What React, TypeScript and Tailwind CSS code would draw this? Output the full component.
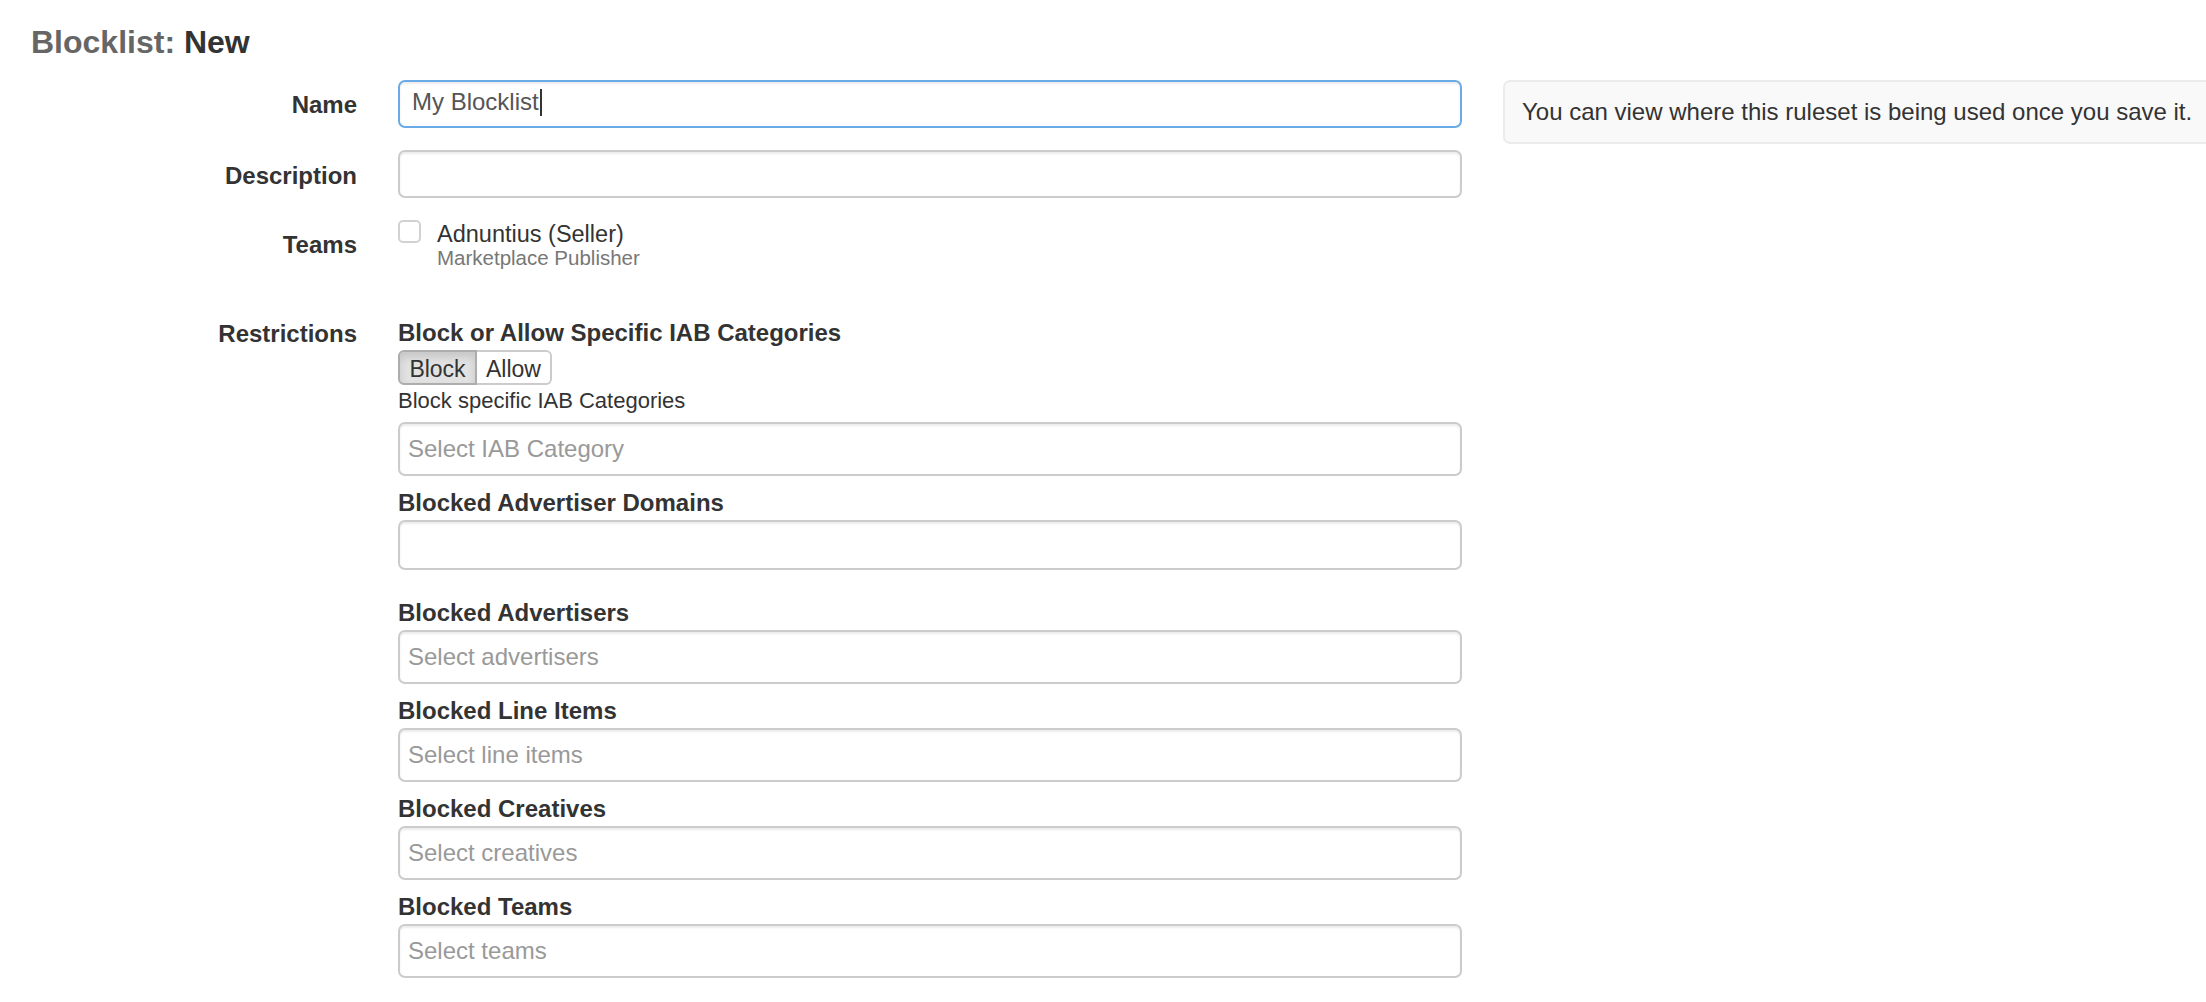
const SELECTS = [
  { label: 'Blocked Advertisers', placeholder: 'Select advertisers' },
  { label: 'Blocked Line Items', placeholder: 'Select line items' },
  { label: 'Blocked Creatives', placeholder: 'Select creatives' },
  { label: 'Blocked Teams', placeholder: 'Select teams' },
];

const inputBase =
  'flex w-full items-center rounded-[7px] border-2 bg-white text-[24px] leading-[28px] shadow-[inset_0_2px_2px_rgba(0,0,0,0.075)]';

function FieldLabel({ children, pad }: { children: React.ReactNode; pad: string }) {
  return (
    <div className={`${pad} text-right text-[24px] font-bold leading-[34px] text-[#333]`}>{children}</div>
  );
}

function SelectBox({ placeholder }: { placeholder: string }) {
  return (
    <div className={`${inputBase} h-[54px] border-[#ccc] pl-[8px] text-[#999]`}>{placeholder}</div>
  );
}

export default function App() {
  return (
    <div className="min-h-screen overflow-hidden bg-white pl-[31px] font-['Liberation_Sans',Arial,sans-serif] text-[#333]">
      <h1 className="pt-[25px] text-[32px] font-bold leading-[34px]">
        <span className="text-[#666]">Blocklist:</span> New
      </h1>

      <div className="mt-[21px] flex items-start">
        <form className="w-[1431px] shrink-0">
          <div className="mb-[21.5px] grid grid-cols-[326px_1064px] gap-x-[41px]">
            <FieldLabel pad="pt-[8px]">Name</FieldLabel>
            <div
              className={`${inputBase} h-[48px] border-[#6aaae6] pb-[4px] pl-[12px] text-[#555] shadow-[inset_0_2px_2px_rgba(0,0,0,0.075),0_0_16px_rgba(102,175,233,0.55)]`}
            >
              My Blocklist
              <span className="ml-[1px] inline-block h-[27px] w-[2px] bg-[#333]" />
            </div>
          </div>

          <div className="mb-[21px] grid grid-cols-[326px_1064px] gap-x-[41px]">
            <FieldLabel pad="pt-[9px]">Description</FieldLabel>
            <div className={`${inputBase} h-[48px] border-[#ccc] pb-[4px] pl-[12px] text-[#555]`} />
          </div>

          <div className="mb-[48.5px] grid grid-cols-[326px_1064px] gap-x-[41px]">
            <FieldLabel pad="pt-[9px]">Teams</FieldLabel>
            <div className="flex gap-[16px]">
              <span className="mt-[1px] size-[23px] shrink-0 rounded-[5px] border-2 border-[#d2d2d2] bg-white" />
              <div className="pt-[1px]">
                <div className="text-[23.5px] leading-[28px] text-[#333]">Adnuntius (Seller)</div>
                <div className="text-[20.5px] leading-[20px] text-[#777]">Marketplace Publisher</div>
              </div>
            </div>
          </div>

          <div className="grid grid-cols-[326px_1064px] gap-x-[41px]">
            <FieldLabel pad="pt-[1px]">Restrictions</FieldLabel>
            <div>
              <div className="text-[24px] font-bold leading-[34px]">Block or Allow Specific IAB Categories</div>
              <div className="flex h-[35px] text-[23px]">
                <button
                  type="button"
                  className="w-[79px] rounded-l-[6px] border-2 border-[#adadad] bg-[#e2e2e2] text-[#333] shadow-[inset_0_5px_8px_rgba(0,0,0,0.125)]"
                >
                  Block
                </button>
                <button
                  type="button"
                  className="w-[75px] rounded-r-[6px] border-2 border-l-0 border-[#ccc] bg-white text-[#333]"
                >
                  Allow
                </button>
              </div>
              <div className="text-[22px] leading-[31px]">Block specific IAB Categories</div>
              <div className="mt-[6px]">
                <SelectBox placeholder="Select IAB Category" />
              </div>

              <div className="mt-[10px] text-[24px] font-bold leading-[34px]">Blocked Advertiser Domains</div>
              <div className={`${inputBase} mb-[26px] h-[50px] border-[#ccc]`} />

              {SELECTS.map((s) => (
                <div key={s.label} className="mb-[10px]">
                  <div className="text-[24px] font-bold leading-[34px]">{s.label}</div>
                  <SelectBox placeholder={s.placeholder} />
                </div>
              ))}
            </div>
          </div>
        </form>

        <aside className="ml-[41px] flex h-[64px] shrink-0 items-center whitespace-nowrap rounded-[7px] border-2 border-[#ececec] bg-[#f9f9f9] pl-[17px] pr-[40px] text-[24px] text-[#333]">
          You can view where this ruleset is being used once you save it.
        </aside>
      </div>
    </div>
  );
}
